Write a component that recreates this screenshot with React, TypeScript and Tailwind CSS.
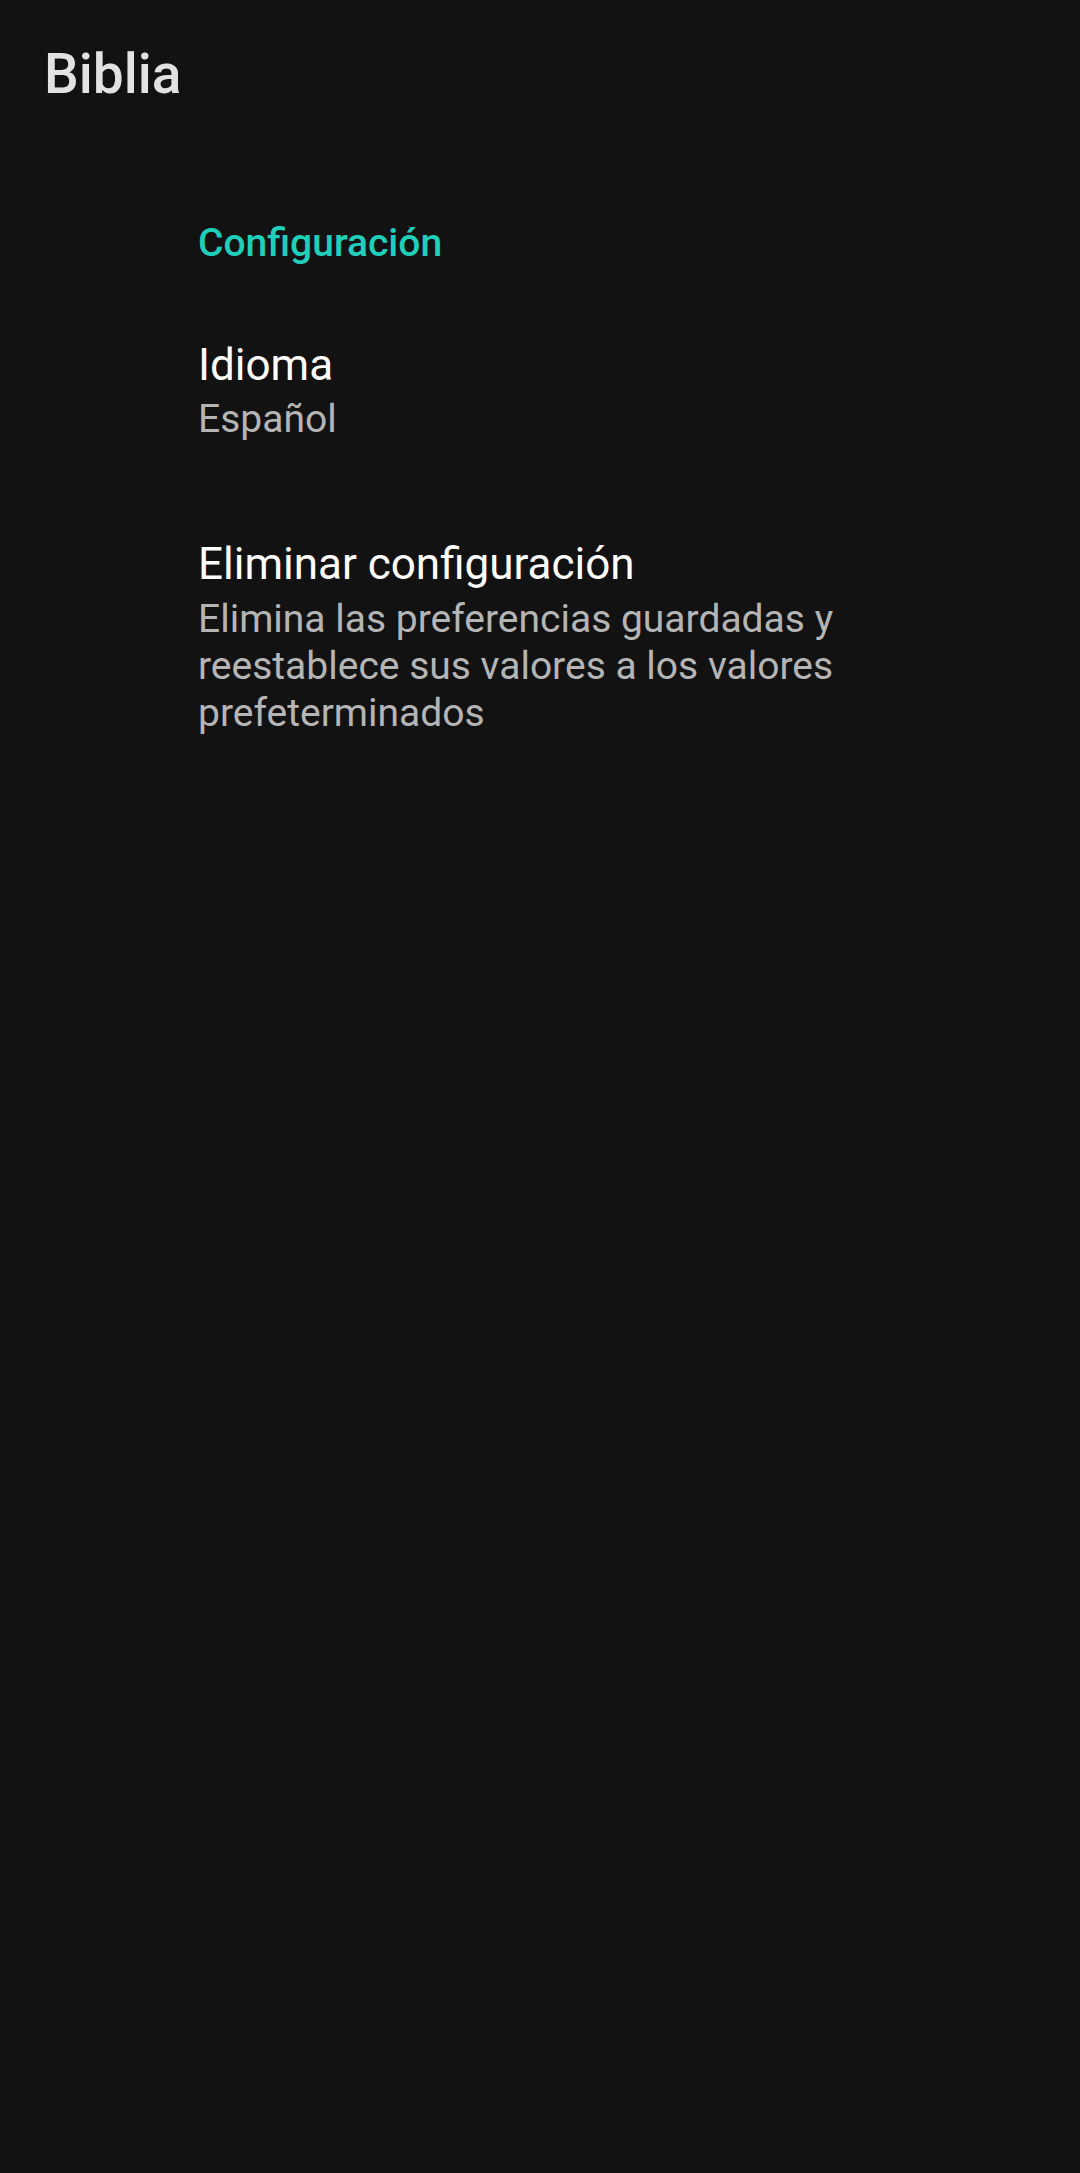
export default function App() {
  return (
    <div
      className="min-h-[2173px] w-full bg-[#121212] antialiased"
      style={{ fontFamily: 'Roboto, "Noto Sans", sans-serif' }}
    >
      <header className="pl-[44px] pt-[42px]">
        <h1 className="text-[55px] font-medium leading-[64px] text-[#e2e2e2]">Biblia</h1>
      </header>
      <main className="pl-[198px] pr-[44px]">
        <h2 className="mt-[115px] text-[39px] font-medium leading-[45px] text-[#1fcfb9]">
          Configuración
        </h2>
        <div className="mt-[73px] flex flex-col">
          <div className="text-[44px] leading-[52px] text-white">Idioma</div>
          <div className="mt-[6px] text-[39px] leading-[45px] text-[#b5b5b5]">Español</div>
        </div>
        <div className="mt-[96px] flex flex-col">
          <div className="text-[44px] leading-[52px] text-white">Eliminar configuración</div>
          <div className="mt-[6px] max-w-[800px] text-[39px] leading-[47px] text-[#b5b5b5]">
            Elimina las preferencias guardadas y reestablece sus valores a los valores prefeterminados
          </div>
        </div>
      </main>
    </div>
  );
}
